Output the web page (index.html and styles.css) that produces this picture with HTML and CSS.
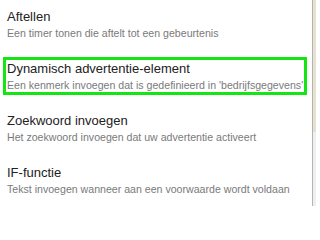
FILE: index.html
```html
<!DOCTYPE html>
<html>
<head>
<meta charset="utf-8">
<link rel="stylesheet" href="styles.css">
</head>
<body>
<div class="frame">
  <div class="list">
    <div class="item">
      <div class="title">Aftellen</div>
      <div class="desc">Een timer tonen die aftelt tot een gebeurtenis</div>
    </div>
    <div class="item selected">
      <div class="title">Dynamisch advertentie-element</div>
      <div class="desc">Een kenmerk invoegen dat is gedefinieerd in 'bedrijfsgegevens'</div>
    </div>
    <div class="item">
      <div class="title">Zoekwoord invoegen</div>
      <div class="desc">Het zoekwoord invoegen dat uw advertentie activeert</div>
    </div>
    <div class="item">
      <div class="title">IF-functie</div>
      <div class="desc">Tekst invoegen wanneer aan een voorwaarde wordt voldaan</div>
    </div>
  </div>
  <div class="scroll">
    <div class="thumb"></div>
  </div>
</div>
</body>
</html>
```
FILE: styles.css
```css
html, body {
  margin: 0;
  padding: 0;
  background: #ffffff;
}
.frame {
  display: flex;
  width: 316px;
  height: 206px;
  overflow: hidden;
  font-family: Arial, "Liberation Sans", sans-serif;
}
.list {
  width: 312px;
  display: flex;
  flex-direction: column;
  gap: 14px;
  padding-top: 5px;
  box-sizing: border-box;
}
.item {
  margin: 0 5px 0 3px;
  border: 3px solid transparent;
  padding: 1px 1px 0 1px;
  white-space: nowrap;
  overflow: hidden;
}
.item.selected {
  border-color: #14e614;
}
.title {
  font-size: 13px;
  line-height: 15px;
  color: #222222;
}
.desc {
  margin-top: 3px;
  font-size: 10.6px;
  line-height: 13px;
  color: #7a7a7a;
}
.scroll {
  width: 4px;
  border-left: 1px solid #b4b4b4;
  background: #efefef;
  box-sizing: border-box;
}
.thumb {
  height: 132px;
  background: #e6e2cf;
}
```
